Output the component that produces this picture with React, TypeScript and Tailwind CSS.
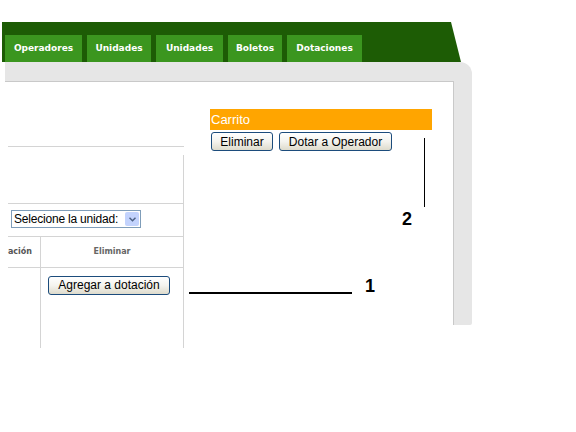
const tabs = [
  { label: 'Operadores', w: 'w-[77px]' },
  { label: 'Unidades', w: 'w-[64px]' },
  { label: 'Unidades', w: 'w-[67px]' },
  { label: 'Boletos', w: 'w-[54px]' },
  { label: 'Dotaciones', w: 'w-[75px]' },
];

function XpButton({ children, className }: { children: React.ReactNode; className: string }) {
  return (
    <button
      className={`h-[19px] rounded-[3px] border border-[#1c4c7c] bg-gradient-to-b from-white via-[#f4f3ee] to-[#dedbcc] text-[12px] leading-none text-black ${className}`}
    >
      {children}
    </button>
  );
}

export default function App() {
  return (
    <div className="relative h-[432px] w-[576px] overflow-hidden bg-white font-['Liberation_Sans',Arial,sans-serif]">
      {/* menu bar */}
      <div className="ml-[2px] mt-[22px] flex h-[40px] w-[459px] items-end bg-[#1d5c05] pl-[3px] [clip-path:polygon(0_0,449px_0,100%_100%,0_100%)]">
        <nav className="flex gap-[5px]">
          {tabs.map((tab, i) => (
            <div
              key={i}
              className={`flex h-[27px] items-center justify-center bg-[#3b961f] font-['DejaVu_Sans',Verdana,sans-serif] text-[9px] font-bold text-white ${tab.w}`}
            >
              {tab.label}
            </div>
          ))}
        </nav>
      </div>

      {/* page frame */}
      <div className="ml-[5px] w-[467px]">
        <div className="h-[19px] rounded-tr-[12px] bg-[#e6e6e6]" />
        <div className="flex items-start">
          <div className="h-[244px] w-[449px] border-t border-r border-[#c9c9c9]">
            <div className="flex">
              {/* left table */}
              <div className="ml-[3px] mt-[64px] w-[176px] border-t border-[#d4d4d4]">
                <div className="h-[8px]" />
                <div className="h-[48px] border-r border-[#d4d4d4]" />
                <div className="h-[33px] border-t border-r border-[#d4d4d4] pl-[3px] pt-[6px]">
                  <div className="flex h-[18px] w-[130px] items-center border border-[#7f9db9] bg-white pl-[2px]">
                    <span className="flex-1 text-[12px] leading-none tracking-[-0.2px] text-black">Selecione la unidad:</span>
                    <span className="mr-[1px] flex h-[14px] w-[14px] items-center justify-center rounded-[2px] bg-[#c3d3fd]">
                      <svg width="7" height="5" viewBox="0 0 7 5">
                        <path d="M0.5 0.8 L3.5 3.8 L6.5 0.8" fill="none" stroke="#4d6185" strokeWidth="1.5" />
                      </svg>
                    </span>
                  </div>
                </div>
                <div className="grid grid-cols-[33px_1fr] border-t border-r border-[#d4d4d4]">
                  <div className="flex h-[30px] items-center justify-end border-r border-[#d4d4d4] pr-[8px] font-['DejaVu_Sans',Verdana,sans-serif] text-[8px] font-bold text-[#555]">
                    ación
                  </div>
                  <div className="flex h-[30px] items-center justify-center font-['DejaVu_Sans',Verdana,sans-serif] text-[8px] font-bold text-[#666]">
                    Eliminar
                  </div>
                  <div className="h-[81px] border-t border-r border-[#d4d4d4]" />
                  <div className="h-[81px] border-t border-[#d4d4d4] pl-[7px] pt-[4px]">
                    <XpButton className="w-[122px]">Agregar a dotación</XpButton>
                  </div>
                </div>
              </div>

              {/* cart */}
              <div className="ml-[26px] mt-[27px] w-[222px]">
                <div className="flex h-[21px] items-center bg-[#ffa500] pl-[1px] text-[13px] font-light text-white">Carrito</div>
                <div className="mt-[2px] flex gap-[6px] pl-[1px]">
                  <XpButton className="w-[62px]">Eliminar</XpButton>
                  <XpButton className="w-[113px]">Dotar a Operador</XpButton>
                </div>
              </div>
            </div>
          </div>
          <div className="h-[244px] w-[18px] rounded-br-[2px] bg-[#e6e6e6]" />
        </div>
      </div>

      {/* annotations */}
      <div className="absolute left-[189px] top-[292px] h-[2px] w-[163px] bg-black" />
      <div className="absolute left-[365px] top-[277px] text-[18px] font-bold leading-none text-black">1</div>
      <div className="absolute left-[424px] top-[138px] h-[69px] w-[1px] bg-black" />
      <div className="absolute left-[402px] top-[210px] text-[18px] font-bold leading-none text-black">2</div>
    </div>
  );
}
